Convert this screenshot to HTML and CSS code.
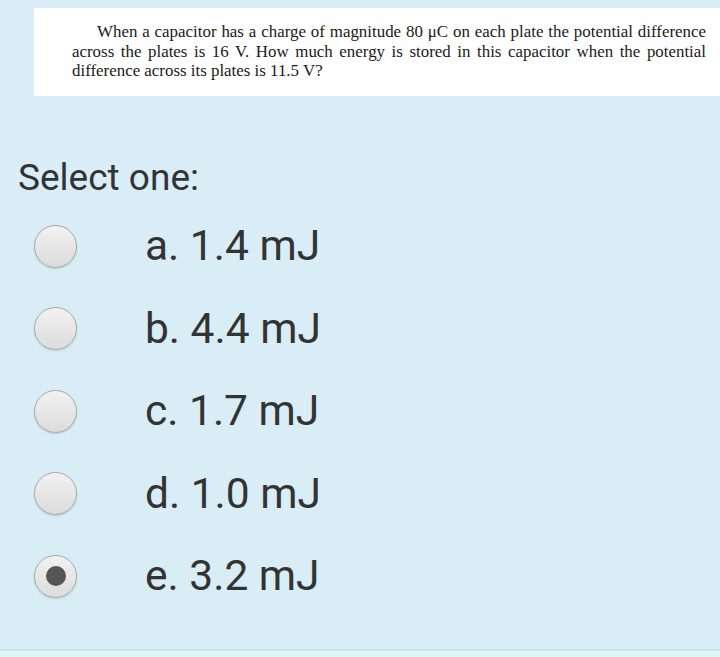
FILE: index.html
```
<!DOCTYPE html>
<html>
<head>
<meta charset="utf-8">
<link rel="stylesheet" href="styles.css">
</head>
<body>
<div class="page">
  <div class="qtext">
    <span class="line first just">When a capacitor has a charge of magnitude 80 μC on each plate the potential difference</span>
    <span class="line just">across the plates is 16 V. How much energy is stored in this capacitor when the potential</span>
    <span class="line">difference across its plates is 11.5 V?</span>
  </div>
  <div class="prompt">Select one:</div>
  <div class="answers">
    <label class="opt"><span class="radio"></span><span class="lbl">a. 1.4 mJ</span></label>
    <label class="opt"><span class="radio"></span><span class="lbl">b. 4.4 mJ</span></label>
    <label class="opt"><span class="radio"></span><span class="lbl">c. 1.7 mJ</span></label>
    <label class="opt"><span class="radio"></span><span class="lbl">d. 1.0 mJ</span></label>
    <label class="opt"><span class="radio checked"></span><span class="lbl">e. 3.2 mJ</span></label>
  </div>
</div>
</body>
</html>
```
FILE: styles.css
```
html, body {
  margin: 0;
  padding: 0;
}
body {
  background: #e2f2f9;
  width: 720px;
  height: 657px;
  overflow: hidden;
}
.page {
  background: #d9edf7;
  height: 651px;
  box-sizing: border-box;
  border-bottom: 2px solid #c9e5ec;
  padding-top: 8px;
  display: flex;
  flex-direction: column;
}
.qtext {
  margin-left: 34px;
  height: 88px;
  box-sizing: border-box;
  background: #ffffff;
  padding: 14px 14px 0 38px;
  font-family: "Liberation Serif", "Times New Roman", serif;
  font-size: 16.9px;
  line-height: 19.5px;
  color: #1a1a1a;
}
.line {
  display: block;
  white-space: nowrap;
}
.just {
  text-align: justify;
  text-align-last: justify;
}
.first {
  padding-left: 25px;
}
.prompt {
  margin-top: 61px;
  margin-left: 18px;
  font-family: Roboto, "Noto Sans", sans-serif;
  font-size: 37px;
  line-height: 42px;
  color: #333333;
}
.answers {
  margin-top: 6px;
  display: flex;
  flex-direction: column;
}
.opt {
  height: 82.5px;
  display: flex;
  align-items: center;
}
.radio {
  width: 43px;
  height: 43px;
  margin-left: 34px;
  box-sizing: border-box;
  border-radius: 50%;
  border: 1.5px solid #a8a8a8;
  background: linear-gradient(#f2f2f2, #dcdcdc);
  box-shadow: 0 1px 2px rgba(0,0,0,0.15);
  display: flex;
  align-items: center;
  justify-content: center;
}
.radio.checked::after {
  content: "";
  width: 20px;
  height: 20px;
  border-radius: 50%;
  background: #565656;
}
.lbl {
  margin-left: 68px;
  font-family: Roboto, "Noto Sans", sans-serif;
  font-size: 42.5px;
  line-height: 48px;
  color: #333333;
}
```
